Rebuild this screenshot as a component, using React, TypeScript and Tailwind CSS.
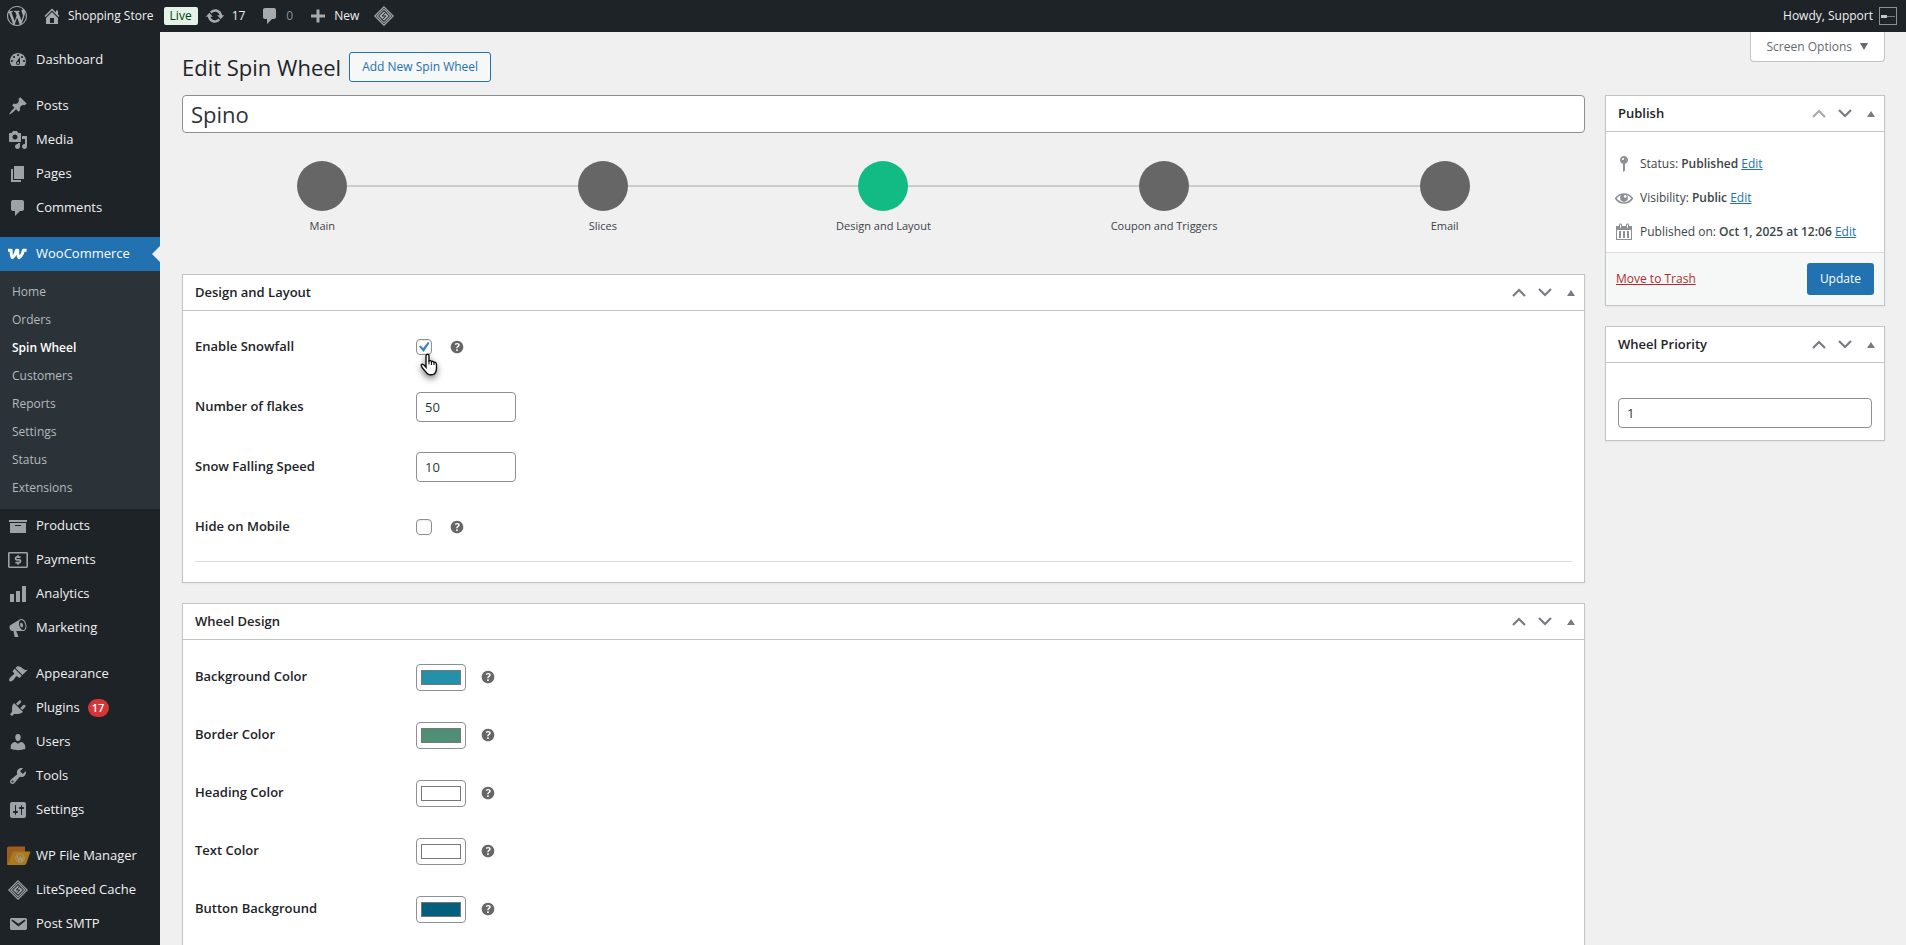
import React, { useState } from "react"

type Icon = string | React.ReactNode

interface MenuEntry {
  label: string
  icon: Icon
  badge?: number
}

const ICONS = {
  wordpress: "M20 10c0-5.51-4.49-10-10-10C4.48 0 0 4.49 0 10c0 5.52 4.48 10 10 10 5.51 0 10-4.48 10-10zM7.78 15.37L4.37 6.22c.55-.02 1.17-.08 1.17-.08.5-.06.44-1.13-.06-1.11 0 0-1.45.11-2.37.11-.18 0-.37 0-.58-.01C4.12 2.69 6.87 1.11 10 1.11c2.33 0 4.45.87 6.05 2.34-.68-.11-1.65.39-1.65 1.58 0 .74.45 1.36.9 2.1.35.61.55 1.36.55 2.46 0 1.49-1.4 5-1.4 5l-3.03-8.37c.54-.02.82-.17.82-.17.5-.05.44-1.25-.06-1.22 0 0-1.44.12-2.38.12-.87 0-2.33-.12-2.33-.12-.5-.03-.56 1.2-.06 1.22l.92.08 1.26 3.41zM17.41 10c.24-.64.74-1.87.43-4.25.7 1.29 1.05 2.71 1.05 4.25 0 3.29-1.73 6.24-4.4 7.78.97-2.59 1.94-5.2 2.92-7.78zM6.1 18.09C3.12 16.65 1.11 13.53 1.11 10c0-1.3.23-2.48.72-3.59C3.25 10.3 4.67 14.2 6.1 18.09zm4.03-6.63l2.58 6.98c-.86.29-1.76.45-2.71.45-.79 0-1.57-.11-2.29-.33.81-2.38 1.62-4.74 2.42-7.1z",
  home: "M16 8.5l1.53 1.53-1.06 1.06L10 4.6l-6.47 6.5-1.06-1.07L10 2.5l4 4v-2h2v4zm-6-2.46l6 5.99V18H4v-5.97zM12 17v-5H8v5h4z",
  update: "M10.2 3.28c3.53 0 6.43 2.61 6.92 6h2.08l-3.5 4-3.5-4h2.32c-.45-1.97-2.21-3.45-4.32-3.45-1.45 0-2.73.71-3.54 1.78L4.95 5.66C6.23 4.2 8.11 3.28 10.2 3.28zm-.4 13.44c-3.52 0-6.43-2.61-6.92-6H.8l3.5-4c1.17 1.33 2.33 2.67 3.5 4H5.48c.45 1.97 2.21 3.45 4.32 3.45 1.45 0 2.73-.71 3.54-1.78l1.71 1.95c-1.28 1.46-3.15 2.38-5.25 2.38z",
  plus: "M17 8.5v3h-5.500v5h-3v-5H3v-3h5.500v-5h3v5z",
  dashboard: "M3.76 16h12.48c1.1-1.37 1.76-3.11 1.76-5 0-4.42-3.58-8-8-8s-8 3.58-8 8c0 1.89.66 3.63 1.76 5zM10 4c.55 0 1 .45 1 1s-.45 1-1 1-1-.45-1-1 .45-1 1-1zM6 6c.55 0 1 .45 1 1s-.45 1-1 1-1-.45-1-1 .45-1 1-1zm8 0c.55 0 1 .45 1 1s-.45 1-1 1-1-.45-1-1 .45-1 1-1zm-5.37 5.55L12 7v6c0 1.1-.9 2-2 2s-2-.9-2-2c0-.57.24-1.08.63-1.45zM4 10c.55 0 1 .45 1 1s-.45 1-1 1-1-.45-1-1 .45-1 1-1zm12 0c.55 0 1 .45 1 1s-.45 1-1 1-1-.45-1-1 .45-1 1-1zm-5 3c0-.55-.45-1-1-1s-1 .45-1 1 .45 1 1 1 1-.45 1-1z",
  posts: "M10.44 3.02l1.82-1.82 6.36 6.35-1.83 1.82c-1.05-.68-2.48-.57-3.41.36l-.75.75c-.92.93-1.04 2.35-.35 3.41l-1.83 1.82-2.41-2.41-2.8 2.79c-.42.42-3.38 2.71-3.8 2.29s1.86-3.39 2.28-3.81l2.79-2.79L4.1 9.36l1.83-1.82c1.05.69 2.48.57 3.4-.36l.75-.75c.93-.92 1.05-2.35.36-3.41z",
  media: "M13 11V4c0-.55-.45-1-1-1h-1.67L9 1H5L3.67 3H2c-.55 0-1 .45-1 1v7c0 .55.45 1 1 1h10c.55 0 1-.45 1-1zM7 4.5c1.38 0 2.5 1.12 2.5 2.5S8.38 9.5 7 9.5 4.5 8.38 4.5 7 5.62 4.5 7 4.5zM14 6h5v10.5c0 1.38-1.12 2.5-2.5 2.5S14 17.88 14 16.5s1.12-2.5 2.5-2.5c.17 0 .34.02.5.05V9h-3V6zm-4 8.05V13h2v3.5c0 1.38-1.12 2.5-2.5 2.5S7 17.88 7 16.5 8.12 14 9.5 14c.17 0 .34.02.5.05z",
  pages: "M6 15V2h10v13H6zm-1 1h8v2H3V5h2v11z",
  comments: "M5 2h9c1.1 0 2 .9 2 2v7c0 1.1-.9 2-2 2h-2l-5 5v-5H5c-1.1 0-2-.9-2-2V4c0-1.1.9-2 2-2z",
  archive: "M19 4v2H1V4h18zM2 7h16v10H2V7zm11 3V9H7v1h6z",
  chart: "M18 18V2h-4v16h4zm-6 0V7H8v11h4zm-6 0v-8H2v8h4z",
  megaphone: "M18.15 5.94c.46 1.62.38 3.22-.02 4.48-.42 1.28-1.26 2.18-2.3 2.48-.16.06-.26.06-.4.06-.06.02-.12.02-.18.02-.06.02-.14.02-.22.02h-6.8l2.22 5.5c.02.14-.06.26-.14.34-.08.1-.24.16-.34.16H6.95c-.1 0-.26-.06-.34-.16-.08-.08-.16-.2-.14-.34l-1-5.5H4.25l-.02-.02c-.5.06-1.08-.18-1.54-.62s-.88-1.08-1.06-1.88c-.24-.8-.2-1.56-.02-2.2.18-.62.58-1.08 1.06-1.3l.02-.02 9-5.4c.1-.06.18-.1.24-.16.06-.04.14-.08.24-.12.16-.08.28-.12.5-.18 1.04-.3 2.24.1 3.22.98s1.84 2.24 2.26 3.86zm-2.58 5.98h-.02c.4-.1.74-.34 1.04-.7.58-.7.86-1.76.86-3.04 0-.64-.1-1.3-.28-1.98-.34-1.36-1.02-2.5-1.78-3.24s-1.68-1.1-2.46-.88c-.82.22-1.4.96-1.7 2-.32 1.04-.28 2.36.06 3.72.38 1.36 1 2.5 1.8 3.24.78.74 1.62 1.1 2.48.88zm-2.54-7.08c.22-.04.42-.02.62.04.38.16.76.48 1.02 1s.42 1.2.42 1.78c0 .3-.04.56-.12.8-.18.48-.44.84-.86.94-.34.1-.8-.06-1.14-.4s-.64-.86-.78-1.5c-.18-.62-.12-1.24.02-1.72s.48-.84.82-.94z",
  appearance: "M14.48 11.06L7.41 3.99l1.5-1.5c.5-.56 2.3-.47 3.51.32 1.21.8 1.43 1.28 2.91 2.1 1.18.64 2.45 1.26 4.45.85zm-.71.71L6.7 4.7 4.93 6.47c-.39.39-.39 1.02 0 1.41l1.06 1.06c.39.39.39 1.03 0 1.42-.6.6-1.43 1.11-2.21 1.69-.35.26-.7.53-1.01.84C1.43 14.23.4 16.08 1.4 17.07c.99 1 2.84-.03 4.18-1.36.31-.31.58-.66.85-1.02.57-.78 1.08-1.61 1.69-2.21.39-.39 1.02-.39 1.41 0l1.06 1.06c.39.39 1.02.39 1.41 0z",
  plugins: "M13.11 4.36L9.87 7.6 8 5.73l3.24-3.24c.35-.34 1.05-.2 1.56.32.52.51.66 1.21.31 1.55zm-8 1.77l.91-1.12 9.01 9.01-1.19.84c-.71.71-2.63 1.16-3.82 1.16H6.14L4.9 17.26c-.59.59-1.54.59-2.12 0-.59-.58-.59-1.53 0-2.12l1.24-1.24v-3.88c0-1.13.4-3.19 1.09-3.89zm7.26 3.97l3.24-3.24c.34-.35 1.04-.21 1.55.31.52.51.66 1.21.31 1.55l-3.24 3.25z",
  users: "M10 9.25c-2.27 0-2.73-3.44-2.73-3.44C7 4.02 7.82 2 9.97 2c2.16 0 2.98 2.02 2.71 3.81 0 0-.41 3.44-2.68 3.44zm0 2.57L12.72 10c2.39 0 4.52 2.33 4.52 4.53v2.49s-3.65 1.13-7.24 1.13c-3.65 0-7.24-1.13-7.24-1.13v-2.49c0-2.25 1.94-4.48 4.47-4.48z",
  tools: "M16.68 9.77c-1.34 1.34-3.3 1.67-4.95.99l-5.41 6.52c-.99.99-2.59.99-3.58 0s-.99-2.59 0-3.57l6.52-5.42c-.68-1.65-.35-3.61.99-4.95 1.28-1.28 3.12-1.62 4.72-1.06l-2.89 2.89 2.82 2.82 2.86-2.87c.53 1.58.18 3.39-1.08 4.65zM3.81 16.21c.4.39 1.04.39 1.43 0 .4-.4.4-1.04 0-1.43-.39-.4-1.03-.4-1.43 0-.39.39-.39 1.03 0 1.43z",
  settings: "M18 16V4c0-1.1-.9-2-2-2H4c-1.1 0-2 .9-2 2v12c0 1.1.9 2 2 2h12c1.1 0 2-.9 2-2zM8 11h1c.55 0 1 .45 1 1s-.45 1-1 1H8v1.5c0 .28-.22.5-.5.5s-.5-.22-.5-.5V13H6c-.55 0-1-.45-1-1s.45-1 1-1h1V5.5c0-.28.22-.5.5-.5s.5.22.5.5V11zm5-2h-1c-.55 0-1-.45-1-1s.45-1 1-1h1V5.5c0-.28.22-.5.5-.5s.5.22.5.5V7h1c.55 0 1 .45 1 1s-.45 1-1 1h-1v5.5c0 .28-.22.5-.5.5s-.5-.22-.5-.5V9z",
  email: "M3.87 4h13.25C18.37 4 19 4.59 19 5.79v8.42c0 1.19-.63 1.79-1.88 1.79H3.87c-1.25 0-1.88-.6-1.88-1.79V5.79c0-1.2.63-1.79 1.88-1.79zm6.62 8.6l6.74-5.53c.24-.2.43-.66.13-1.07-.29-.41-.82-.42-1.17-.17l-5.7 3.86L4.8 5.83c-.35-.25-.88-.24-1.17.17-.3.41-.11.87.13 1.07z",
  help: "M17 10c0-3.87-3.14-7-7-7-3.87 0-7 3.13-7 7s3.13 7 7 7c3.86 0 7-3.13 7-7zm-6.3 1.48H9.14v-.43c0-.38.08-.7.24-.98s.46-.57.88-.89c.41-.29.68-.53.81-.71.14-.18.2-.39.2-.62 0-.25-.09-.44-.28-.58-.19-.13-.45-.19-.79-.19-.58 0-1.25.19-2 .57l-.64-1.28c.87-.49 1.8-.74 2.77-.74.81 0 1.45.2 1.92.58.48.39.71.91.71 1.55 0 .43-.09.8-.29 1.11-.19.32-.57.67-1.11 1.06-.38.28-.61.49-.71.63-.1.15-.15.34-.15.57v.35zm-1.47 2.74c-.18-.17-.27-.42-.27-.73 0-.33.08-.58.26-.75s.43-.25.77-.25c.32 0 .57.09.75.26s.27.42.27.74c0 .3-.09.55-.27.72-.18.18-.43.27-.75.27-.33 0-.58-.09-.76-.26z",
  pin: "M14 6c0 1.86-1.28 3.41-3 3.86V16c0 1-2 2-2 2V9.86c-1.72-.45-3-2-3-3.86 0-2.21 1.79-4 4-4s4 1.79 4 4zM8 5c0 .55.45 1 1 1s1-.45 1-1-.45-1-1-1-1 .45-1 1z",
  calendar: "M15 4h3v14H2V4h3V3c0-.83.67-1.5 1.5-1.5S8 2.17 8 3v1h4V3c0-.83.67-1.5 1.5-1.5S15 2.17 15 3v1zM6 3v2.5c0 .28.22.5.5.5s.5-.22.5-.5V3c0-.28-.22-.5-.5-.5S6 2.72 6 3zm7 0v2.5c0 .28.22.5.5.5s.5-.22.5-.5V3c0-.28-.22-.5-.5-.5s-.5.22-.5.5zm4 14V8H3v9h14zM7 16V9H5v7h2zm4 0V9H9v7h2zm4 0V9h-2v7h2z",
}

const Dashicon: React.FC<{ path: string; className?: string }> = ({ path, className = "size-5" }) => (
  <svg viewBox="0 0 20 20" fill="currentColor" fillRule="evenodd" className={`${className} shrink-0`} aria-hidden="true">
    <path d={path} />
  </svg>
)

const LiteSpeedIcon = () => (
  <svg viewBox="0 0 20 20" className="size-5 shrink-0" fill="none" stroke="currentColor" aria-hidden="true">
    <path d="M10 .8L19.200 10 10 19.200.8 10z" strokeWidth="1.200" />
    <path d="M10 3.200L16.800 10 10 16.800 3.200 10z" strokeWidth="1.100" />
    <path d="M10 5.200L14.800 10 10 14.800 5.200 10z" fill="currentColor" stroke="none" />
    <path d="M11.600 6.600L8.200 10h3.600l-3.400 3.400" stroke="#1d2327" strokeWidth="1" />
  </svg>
)

const WooIcon = () => (
  <svg viewBox="0 0 20 20" className="size-5 shrink-0" fill="none" stroke="#fff" aria-hidden="true">
    <path
      d="M0 6.200h3.200c-.2 4 .3 6.300 1.200 7.400C6 12.500 7.600 9.800 8.500 6.200h1.300c-.3 4 .1 6.300 1.300 7.400 2-1.200 3.500-3.500 4.300-7.400h3.200"
      strokeWidth="3"
      strokeLinejoin="round"
    />
  </svg>
)

const PaymentsIcon = () => (
  <svg viewBox="0 0 20 20" className="size-5 shrink-0" fill="none" stroke="currentColor" aria-hidden="true">
    <rect x=".8" y="2.800" width="18.400" height="14.400" rx=".6" strokeWidth="1.600" />
    <path d="M12.600 7.200H8.800c-.9 0-1.300.6-1.300 1.300 0 .8.500 1.300 1.300 1.300h2.400c.8 0 1.300.6 1.300 1.400s-.5 1.400-1.300 1.400H7.400M10 5.200v2M10 12.600v2.200" strokeWidth="1.700" />
  </svg>
)

const FileManagerIcon = () => (
  <svg viewBox="0 0 24 20" className="-ml-px h-5 w-6 shrink-0" aria-hidden="true">
    <path d="M0 2.500C0 1.200.7.5 2 .5h16v13L4 19H0z" fill="#a05c1e" />
    <path d="M6 5.500h17.500l-4 11.500c-.5 1.400-1.300 2-2.600 2H.5z" fill="#a97a1c" />
    <circle cx="13" cy="12" r="4.300" fill="none" stroke="#a7987a" strokeWidth=".9" />
    <path d="M10 10l2 5 1.300-4 1.500 4 1.500-4.500" fill="none" stroke="#a7987a" strokeWidth="1.300" />
  </svg>
)

const EyeIcon = () => (
  <svg viewBox="0 0 20 20" className="size-5 shrink-0" fill="none" stroke="currentColor" aria-hidden="true">
    <path d="M1.700 10.500c2-2.900 5-4.500 8.300-4.500s6.300 1.600 8.300 4.500c-2 2.900-5 4.500-8.300 4.500s-6.300-1.600-8.300-4.500z" strokeWidth="1.600" />
    <circle cx="10" cy="9.800" r="3.900" fill="currentColor" stroke="none" />
    <circle cx="11.200" cy="8.400" r="1.300" fill="#fff" stroke="none" />
  </svg>
)

const menuGroups: MenuEntry[][] = [
  [{ label: "Dashboard", icon: ICONS.dashboard }],
  [
    { label: "Posts", icon: ICONS.posts },
    { label: "Media", icon: ICONS.media },
    { label: "Pages", icon: ICONS.pages },
    { label: "Comments", icon: ICONS.comments },
  ],
  [
    { label: "WooCommerce", icon: <WooIcon /> },
    { label: "Products", icon: ICONS.archive },
    { label: "Payments", icon: <PaymentsIcon /> },
    { label: "Analytics", icon: ICONS.chart },
    { label: "Marketing", icon: ICONS.megaphone },
  ],
  [
    { label: "Appearance", icon: ICONS.appearance },
    { label: "Plugins", icon: ICONS.plugins, badge: 17 },
    { label: "Users", icon: ICONS.users },
    { label: "Tools", icon: ICONS.tools },
    { label: "Settings", icon: ICONS.settings },
  ],
  [
    { label: "WP File Manager", icon: <FileManagerIcon /> },
    { label: "LiteSpeed Cache", icon: <LiteSpeedIcon /> },
    { label: "Post SMTP", icon: ICONS.email },
  ],
]

const wooSubmenu = ["Home", "Orders", "Spin Wheel", "Customers", "Reports", "Settings", "Status", "Extensions"]

const steps = ["Main", "Slices", "Design and Layout", "Coupon and Triggers", "Email"]

const wheelColors = [
  { id: "background", label: "Background Color", value: "#2590a9" },
  { id: "border", label: "Border Color", value: "#4f8f76" },
  { id: "heading", label: "Heading Color", value: "#ffffff" },
  { id: "text", label: "Text Color", value: "#ffffff" },
  { id: "button", label: "Button Background", value: "#045f7c" },
]

const AdminBar = () => (
  <header className="flex h-8 items-center justify-between bg-[#1d2327] pl-[7px] pr-[9px] text-xs text-[#f0f0f1]">
    <nav className="flex items-center" aria-label="Toolbar">
      <a href="#about" aria-label="About WordPress" className="text-[#a7aaad]"><Dashicon path={ICONS.wordpress} /></a>
      <a href="#site" className="ml-[15px] flex items-center gap-1.5">
        <Dashicon path={ICONS.home} className="size-5 text-[#a7aaad]" />
        Shopping Store
      </a>
      <a href="#live" className="ml-2.5 rounded-xs bg-[#e6f2e8] px-1.5 leading-[18px] text-[#00450c]">Live</a>
      <a href="#updates" className="ml-[7px] flex items-center gap-[7px]">
        <Dashicon path={ICONS.update} className="size-5 text-[#a7aaad]" />
        17
      </a>
      <a href="#comments" className="ml-[15px] flex items-center gap-1.5 text-[#8c8f94]">
        <Dashicon path={ICONS.comments} className="size-5 text-[#a7aaad]" />
        0
      </a>
      <a href="#new" className="ml-[15px] flex items-center gap-1.5">
        <Dashicon path={ICONS.plus} className="size-5 text-[#a7aaad]" />
        New
      </a>
      <a href="#litespeed" aria-label="LiteSpeed Cache" className="ml-[15px] text-[#a7aaad]"><LiteSpeedIcon /></a>
    </nav>
    <a href="#profile" className="flex items-center gap-1.5">
      Howdy, Support
      <span className="flex size-[18px] items-center border border-[#8c8f94] px-px">
        <span className="h-[3px] w-1.5 bg-[#c3c4c7]" />
        <span className="h-px w-2 bg-[#787c82]" />
      </span>
    </a>
  </header>
)

const SideMenu = () => (
  <nav aria-label="Main menu" className="w-40 shrink-0 bg-[#1d2327] pt-[11px]">
    {menuGroups.map((group, i) => (
      <ul key={i} className="mb-3">
        {group.map(({ label, icon, badge }) => {
          const active = label === "WooCommerce"
          return (
            <li key={label}>
              <a
                href={`#${label}`}
                className={`relative flex h-[34px] items-center pl-2 text-[13px] ${active ? "bg-[#2271b1] text-white" : "text-[#f0f0f1]"}`}
              >
                <span className="flex w-7 items-center text-[#9ca2a7]">
                  {typeof icon === "string" ? <Dashicon path={icon} /> : icon}
                </span>
                {label}
                {badge && (
                  <span className="ml-2 h-[18px] min-w-[21px] rounded-full bg-[#d63638] px-[3px] text-center text-[11px] font-semibold leading-[18px] text-white">
                    {badge}
                  </span>
                )}
                {active && <span className="absolute right-0 top-[9px] border-8 border-l-0 border-transparent border-r-[#f0f0f1]" />}
              </a>
              {active && (
                <ul className="bg-[#2c3338] py-[7px]">
                  {wooSubmenu.map((item) => (
                    <li key={item}>
                      <a
                        href={`#${item}`}
                        className={`block px-3 text-xs leading-7 ${item === "Spin Wheel" ? "font-semibold text-white" : "text-[#b4b9be]"}`}
                      >
                        {item}
                      </a>
                    </li>
                  ))}
                </ul>
              )}
            </li>
          )
        })}
      </ul>
    ))}
  </nav>
)

const PostBox: React.FC<{ title: string; first?: boolean; className?: string; children: React.ReactNode }> = ({ title, first, className = "", children }) => (
  <section className={`border border-[#c3c4c7] bg-white shadow-xs ${className}`}>
    <div className="flex h-9 items-center justify-between border-b border-[#c3c4c7] pl-3 text-[#787c82]">
      <h2 className="text-[13px] font-semibold text-[#1d2327]">{title}</h2>
      <div className="flex items-center">
        <button type="button" aria-label="Move up" className={`flex w-[26px] justify-center ${first ? "text-[#a7aaad]" : ""}`}>
          <svg viewBox="0 0 14 9" className="h-[9px] w-3.5" fill="none" stroke="currentColor" strokeWidth="2.200"><path d="M1 8l6-6 6 6" /></svg>
        </button>
        <button type="button" aria-label="Move down" className="flex w-[26px] justify-center">
          <svg viewBox="0 0 14 9" className="h-[9px] w-3.5" fill="none" stroke="currentColor" strokeWidth="2.200"><path d="M1 1l6 6 6-6" /></svg>
        </button>
        <button type="button" aria-label="Toggle panel" className="flex w-[26px] justify-center">
          <svg viewBox="0 0 8 6" className="h-1.5 w-2" fill="currentColor"><path d="M4 0l4 6H0z" /></svg>
        </button>
      </div>
    </div>
    {children}
  </section>
)

const HelpTip = () => <Dashicon path={ICONS.help} className="size-[18px] text-[#666]" />

const Field: React.FC<{ id: string; label: string; className: string; children: React.ReactNode }> = ({ id, label, className, children }) => (
  <div className={`flex items-center ${className}`}>
    <label htmlFor={id} className="w-[221px] text-[13px] font-semibold text-[#1d2327]">{label}</label>
    {children}
  </div>
)

const inputClass = "rounded-[4px] border border-[#8c8f94] bg-white text-[#2c3338] outline-none"
const checkClass = "size-4 appearance-none rounded-[4px] border border-[#8c8f94] bg-white shadow-[inset_0_1px_2px_rgba(0,0,0,0.1)]"

const CheckBox: React.FC<{ id: string; checked: boolean; onChange: (v: boolean) => void; children?: React.ReactNode }> = ({ id, checked, onChange, children }) => (
  <span className="relative flex">
    <input id={id} type="checkbox" className={checkClass} checked={checked} onChange={(e) => onChange(e.target.checked)} />
    {checked && (
      <svg viewBox="0 0 16 16" className="pointer-events-none absolute inset-0 size-4" fill="#3582c4" aria-hidden="true">
        <path d="M3 7.600l1.500-1.100 2.700 2.600 4.700-6.100 1.600 1-5.900 8.900z" />
      </svg>
    )}
    {children}
  </span>
)

const PointerCursor = () => (
  <svg viewBox="0 0 20 24" className="pointer-events-none absolute left-1 top-3.5 h-6 w-5 drop-shadow-[0_3px_3px_rgba(0,0,0,0.5)]" aria-hidden="true">
    <path
      d="M7.500 1.200c1 0 1.500.7 1.500 1.700v5c.8-.6 2-.3 2.400.6.900-.4 2-.1 2.400.8 1-.4 2.200.1 2.400 1.200.2.500.3 1 .3 1.500v3.500c0 1.500-.3 2.600-1 3.800-.5.900-.7 1.300-1.500 1.800-1 .6-4 .7-5.500.2-1-.4-1.700-1-2.300-2L2 14.500c-.8-1.500-.9-2-.7-2.500.8-1.200 2.200-.6 3 .3l1.700 2V2.900c0-1 .5-1.700 1.500-1.700z"
      fill="#fff"
      stroke="#111"
      strokeWidth="1.400"
    />
    <path d="M9 7.500v4M11.500 8.500v3.500M14 9.700V12" stroke="#111" strokeWidth="1.100" fill="none" />
  </svg>
)

const App = () => {
  const [title, setTitle] = useState("Spino")
  const [snowfall, setSnowfall] = useState(true)
  const [hideMobile, setHideMobile] = useState(false)
  const [flakes, setFlakes] = useState("50")
  const [speed, setSpeed] = useState("10")
  const [priority, setPriority] = useState("1")
  const [colors, setColors] = useState(wheelColors)

  const handleColor = (id: string, value: string) => {
    setColors(colors.map((c) => (c.id === id ? { ...c, value } : c)))
  }

  return (
    <div className="flex min-h-screen flex-col bg-[#f0f0f1] font-['Open_Sans',sans-serif] text-xs text-[#3c434a]">
      <AdminBar />
      <div className="flex grow">
        <SideMenu />
        <main className="grow pl-[22px] pr-[21px]">
          <div className="flex items-start">
            <div className="flex grow items-center gap-2 pt-5">
              <h1 className="text-[22px] leading-[30px] text-[#1d2327]">Edit Spin Wheel</h1>
              <a href="#add" className="rounded-[3px] border border-[#2271b1] bg-[#f6f7f7] px-3 leading-7 text-[#2271b1]">
                Add New Spin Wheel
              </a>
            </div>
            <button type="button" className="flex h-[30px] items-center gap-2 rounded-b-[4px] border border-t-0 border-[#c3c4c7] bg-white px-4 text-[#646970]">
              Screen Options
              <svg viewBox="0 0 8 7" className="h-[7px] w-2" fill="currentColor" aria-hidden="true"><path d="M0 0h8L4 7z" /></svg>
            </button>
          </div>

          <div className="mt-[13px] flex items-start gap-5">
            <form className="min-w-0 grow" onSubmit={(e) => e.preventDefault()}>
              <input
                aria-label="Title"
                value={title}
                onChange={(e) => setTitle(e.target.value)}
                className={`h-[38px] w-full px-2 text-[22px] ${inputClass}`}
              />

              <ol className="mt-7 flex text-[11px] leading-4">
                {steps.map((step, i) => (
                  <li key={step} className="flex flex-1 flex-col items-center gap-[7px]">
                    <div className="flex w-full items-center">
                      <span className={`h-0.5 grow ${i > 0 ? "bg-[#ccc]" : ""}`} />
                      <span className={`size-[50px] rounded-full ${step === "Design and Layout" ? "bg-[#12bb84]" : "bg-[#666]"}`} />
                      <span className={`h-0.5 grow ${i < steps.length - 1 ? "bg-[#ccc]" : ""}`} />
                    </div>
                    <a href={`#step-${i + 1}`}>{step}</a>
                  </li>
                ))}
              </ol>

              <PostBox title="Design and Layout" className="mt-10">
                <div className="px-3 pb-5 pt-1.5">
                  <Field id="snowfall" label="Enable Snowfall" className="h-[60px]">
                    <div className="flex items-center gap-4">
                      <CheckBox id="snowfall" checked={snowfall} onChange={setSnowfall}>
                        <PointerCursor />
                      </CheckBox>
                      <HelpTip />
                    </div>
                  </Field>
                  <Field id="flakes" label="Number of flakes" className="h-[60px]">
                    <input id="flakes" value={flakes} onChange={(e) => setFlakes(e.target.value)} className={`h-[30px] w-[100px] px-2 text-[13px] ${inputClass}`} />
                  </Field>
                  <Field id="speed" label="Snow Falling Speed" className="h-[60px]">
                    <input id="speed" value={speed} onChange={(e) => setSpeed(e.target.value)} className={`h-[30px] w-[100px] px-2 text-[13px] ${inputClass}`} />
                  </Field>
                  <Field id="hide-mobile" label="Hide on Mobile" className="h-[60px]">
                    <div className="flex items-center gap-4">
                      <CheckBox id="hide-mobile" checked={hideMobile} onChange={setHideMobile} />
                      <HelpTip />
                    </div>
                  </Field>
                  <hr className="mt-1 border-[#dcdcde]" />
                </div>
              </PostBox>

              <PostBox title="Wheel Design" className="mt-5">
                <div className="px-3 pb-2 pt-2">
                  {colors.map(({ id, label, value }) => (
                    <Field key={id} id={id} label={label} className="h-[58px]">
                      <div className="flex items-center gap-[13px]">
                        <input
                          id={id}
                          type="color"
                          value={value}
                          onChange={(e) => handleColor(id, e.target.value)}
                          className="h-[27px] w-[50px] rounded-[4px] border border-[#8c8f94] bg-white px-1 py-[5px] [&::-webkit-color-swatch-wrapper]:p-0 [&::-webkit-color-swatch]:border [&::-webkit-color-swatch]:border-[#777]"
                        />
                        <HelpTip />
                      </div>
                    </Field>
                  ))}
                </div>
              </PostBox>
            </form>

            <aside className="w-[280px] shrink-0">
              <PostBox title="Publish" first>
                <ul className="flex h-[120px] flex-col gap-3.5 px-2 pt-[22px] leading-5">
                  <li className="flex items-center gap-1.5">
                    <Dashicon path={ICONS.pin} className="size-5 text-[#8c8f94]" />
                    <span>Status: <b className="font-semibold">Published</b> <a href="#status" className="text-[#2271b1] underline">Edit</a></span>
                  </li>
                  <li className="flex items-center gap-1.5">
                    <span className="text-[#8c8f94]"><EyeIcon /></span>
                    <span>Visibility: <b className="font-semibold">Public</b> <a href="#visibility" className="text-[#2271b1] underline">Edit</a></span>
                  </li>
                  <li className="flex items-center gap-1.5">
                    <Dashicon path={ICONS.calendar} className="size-5 text-[#8c8f94]" />
                    <span className="whitespace-nowrap">Published on: <b className="font-semibold">Oct 1, 2025 at 12:06</b> <a href="#date" className="text-[#2271b1] underline">Edit</a></span>
                  </li>
                </ul>
                <div className="flex items-center justify-between border-t border-[#dcdcde] bg-[#f6f7f7] p-2.5">
                  <a href="#trash" className="text-[#b32d2e] underline">Move to Trash</a>
                  <button type="button" className="h-8 rounded-[3px] bg-[#2271b1] px-[13px] text-white">Update</button>
                </div>
              </PostBox>

              <PostBox title="Wheel Priority" className="mt-5">
                <div className="flex px-3 pb-3 pt-[35px]">
                  <input
                    aria-label="Wheel Priority"
                    value={priority}
                    onChange={(e) => setPriority(e.target.value)}
                    className={`h-[30px] w-full px-2 text-[13px] ${inputClass}`}
                  />
                </div>
              </PostBox>
            </aside>
          </div>
        </main>
      </div>
    </div>
  )
}

export default App
